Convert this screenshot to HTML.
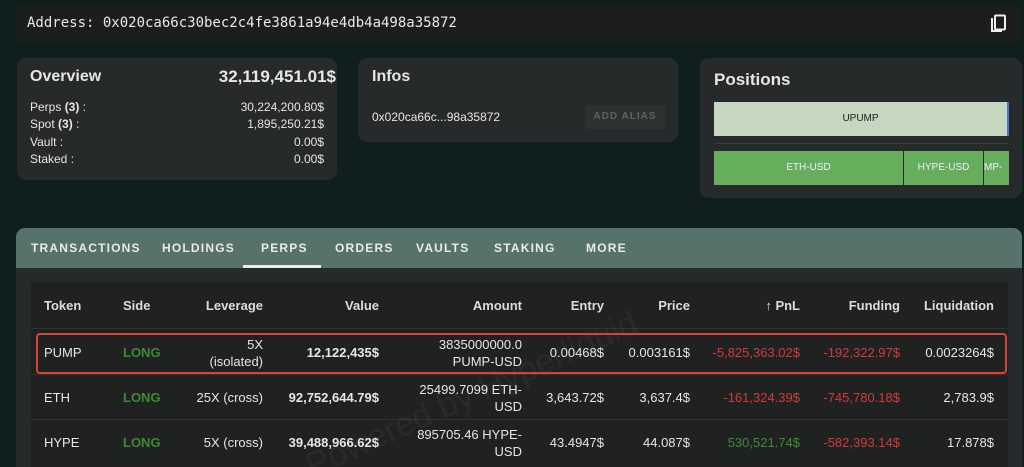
<!DOCTYPE html>
<html><head><meta charset="utf-8"><style>
*{margin:0;padding:0;box-sizing:border-box}
html,body{width:1024px;height:467px;overflow:hidden}
body{background:#0e1f1d;font-family:"Liberation Sans",sans-serif;color:#e6e6e6;position:relative}
.a{position:absolute}
.card{position:absolute;background:#262a2a;border-radius:9px}
.r{position:absolute;text-align:right;white-space:nowrap}
.l{position:absolute;white-space:nowrap}
.hd{font-size:13px;font-weight:bold;color:#dcdcdc}
.c{font-size:13px;color:#e6e6e6}
.g{color:#3c8a32;font-weight:bold}
.red{color:#d23a3a}
.grn{color:#3f8a35}
.tab{position:absolute;top:241px;font-size:12px;font-weight:bold;letter-spacing:1.2px;color:#eaeaea}
</style></head><body>
<div class="a" style="left:16px;top:5px;width:1004px;height:37px;background:#1c1e1e;border-radius:4px"></div>
<div class="l" style="left:27px;top:15px;font-family:'DejaVu Sans Mono','Liberation Mono',monospace;font-size:14px;color:#e8e8e8">Address: 0x020ca66c30bec2c4fe3861a94e4db4a498a35872</div>
<svg class="a" style="left:990px;top:14px" width="18" height="20" viewBox="0 0 18 20"><path d="M2 4v13h10" fill="none" stroke="#eee" stroke-width="2"/><rect x="5" y="1.5" width="10" height="14" fill="none" stroke="#eee" stroke-width="2" rx="1"/></svg>

<div class="card" style="left:17px;top:58px;width:320px;height:122px"></div>
<div class="l" style="left:30px;top:68px;font-size:16px;font-weight:bold">Overview</div>
<div class="r" style="right:688px;top:67px;font-size:17px;font-weight:bold">32,119,451.01$</div>
<div class="l" style="left:30px;top:99px;font-size:12px;line-height:17.3px">Perps <b>(3)</b> :<br>Spot <b>(3)</b> :<br>Vault :<br>Staked :</div>
<div class="r" style="right:700px;top:99px;font-size:12px;line-height:17.3px">30,224,200.80$<br>1,895,250.21$<br>0.00$<br>0.00$</div>

<div class="card" style="left:358px;top:58px;width:320px;height:84px"></div>
<div class="l" style="left:372px;top:68px;font-size:16px;font-weight:bold">Infos</div>
<div class="l" style="left:372px;top:110px;font-size:12px">0x020ca66c...98a35872</div>
<div class="a" style="left:585px;top:105px;width:80px;height:24px;background:#2c3131;border-radius:3px;font-size:10px;font-weight:bold;letter-spacing:1px;color:#5c6464;text-align:center;line-height:24px">ADD ALIAS</div>

<div class="card" style="left:700px;top:58px;width:322px;height:140px"></div>
<div class="l" style="left:714px;top:70px;font-size:17px;font-weight:bold">Positions</div>
<div class="a" style="left:714px;top:102px;width:295px;height:34px;background:#c5d8bf;border-right:2px solid #4a78c8;color:#222;font-size:10px;text-align:center;line-height:34px">UPUMP</div>
<div class="a" style="left:714px;top:143px;width:294px;height:1px;background:#3a3e3e"></div>
<div class="a" style="left:714px;top:151px;width:189px;height:34px;background:#66ad5c;color:#eef;font-size:10px;text-align:center;line-height:34px">ETH-USD</div>
<div class="a" style="left:904px;top:151px;width:79px;height:34px;background:#66ad5c;color:#eef;font-size:10px;text-align:center;line-height:34px">HYPE-USD</div>
<div class="a" style="left:984px;top:151px;width:25px;height:34px;background:#66ad5c;color:#eef;font-size:10px;line-height:34px;overflow:hidden">MP-U</div>

<div class="a" style="left:16px;top:228px;width:1006px;height:260px;background:#262a2a;border-radius:9px 9px 0 0;overflow:hidden">
<div class="a" style="left:0;top:0;width:1006px;height:40px;background:#56726b"></div>
</div>
<div class="tab" style="left:31px">TRANSACTIONS</div>
<div class="tab" style="left:162px">HOLDINGS</div>
<div class="tab" style="left:261px">PERPS</div>
<div class="a" style="left:243px;top:265px;width:78px;height:3px;background:#e8ecea"></div>
<div class="tab" style="left:335px">ORDERS</div>
<div class="tab" style="left:416px">VAULTS</div>
<div class="tab" style="left:494px">STAKING</div>
<div class="tab" style="left:586px">MORE</div>

<div class="a" style="left:31px;top:282px;width:977px;height:190px;background:#202222"></div>
<div class="a" style="left:31px;top:328px;width:977px;height:1px;background:#303434"></div>
<div class="a" style="left:31px;top:374px;width:977px;height:1px;background:#303434"></div>
<div class="a" style="left:31px;top:419px;width:977px;height:1px;background:#303434"></div>

<div class="l" style="left:300px;top:450px;font-size:34px;color:rgba(255,255,255,0.045);transform:rotate(-24deg);transform-origin:left top">Powered by Hyperliquid</div>

<div class="a" style="left:36px;top:333px;width:971px;height:41px;border:2px solid #d9432f;border-radius:4px"></div>

<div class="l hd" style="left:44px;top:298px">Token</div>
<div class="l hd" style="left:123px;top:298px">Side</div>
<div class="r hd" style="right:761px;top:298px">Leverage</div>
<div class="r hd" style="right:645px;top:298px">Value</div>
<div class="r hd" style="right:502px;top:298px">Amount</div>
<div class="r hd" style="right:420px;top:298px">Entry</div>
<div class="r hd" style="right:334px;top:298px">Price</div>
<div class="r hd" style="right:224px;top:298px">&#8593; PnL</div>
<div class="r hd" style="right:124px;top:298px">Funding</div>
<div class="r hd" style="right:30px;top:298px">Liquidation</div>

<div class="l c" style="left:44px;top:345px">PUMP</div>
<div class="l c g" style="left:123px;top:345px">LONG</div>
<div class="r c" style="right:761px;top:336px;line-height:17px">5X<br>(isolated)</div>
<div class="r c" style="right:645px;top:345px;font-weight:bold">12,122,435$</div>
<div class="r c" style="right:502px;top:336px;line-height:17px">3835000000.0<br>PUMP-USD</div>
<div class="r c" style="right:420px;top:345px">0.00468$</div>
<div class="r c" style="right:334px;top:345px">0.003161$</div>
<div class="r c red" style="right:224px;top:345px">-5,825,363.02$</div>
<div class="r c red" style="right:124px;top:345px">-192,322.97$</div>
<div class="r c" style="right:30px;top:345px">0.0023264$</div>

<div class="l c" style="left:44px;top:390px">ETH</div>
<div class="l c g" style="left:123px;top:390px">LONG</div>
<div class="r c" style="right:761px;top:390px">25X (cross)</div>
<div class="r c" style="right:645px;top:390px;font-weight:bold">92,752,644.79$</div>
<div class="r c" style="right:502px;top:381px;line-height:17px">25499.7099 ETH-<br>USD</div>
<div class="r c" style="right:420px;top:390px">3,643.72$</div>
<div class="r c" style="right:334px;top:390px">3,637.4$</div>
<div class="r c red" style="right:224px;top:390px">-161,324.39$</div>
<div class="r c red" style="right:124px;top:390px">-745,780.18$</div>
<div class="r c" style="right:30px;top:390px">2,783.9$</div>

<div class="l c" style="left:44px;top:435px">HYPE</div>
<div class="l c g" style="left:123px;top:435px">LONG</div>
<div class="r c" style="right:761px;top:435px">5X (cross)</div>
<div class="r c" style="right:645px;top:435px;font-weight:bold">39,488,966.62$</div>
<div class="r c" style="right:502px;top:426px;line-height:17px">895705.46 HYPE-<br>USD</div>
<div class="r c" style="right:420px;top:435px">43.4947$</div>
<div class="r c" style="right:334px;top:435px">44.087$</div>
<div class="r c grn" style="right:224px;top:435px">530,521.74$</div>
<div class="r c red" style="right:124px;top:435px">-582,393.14$</div>
<div class="r c" style="right:30px;top:435px">17.878$</div>
</body></html>
